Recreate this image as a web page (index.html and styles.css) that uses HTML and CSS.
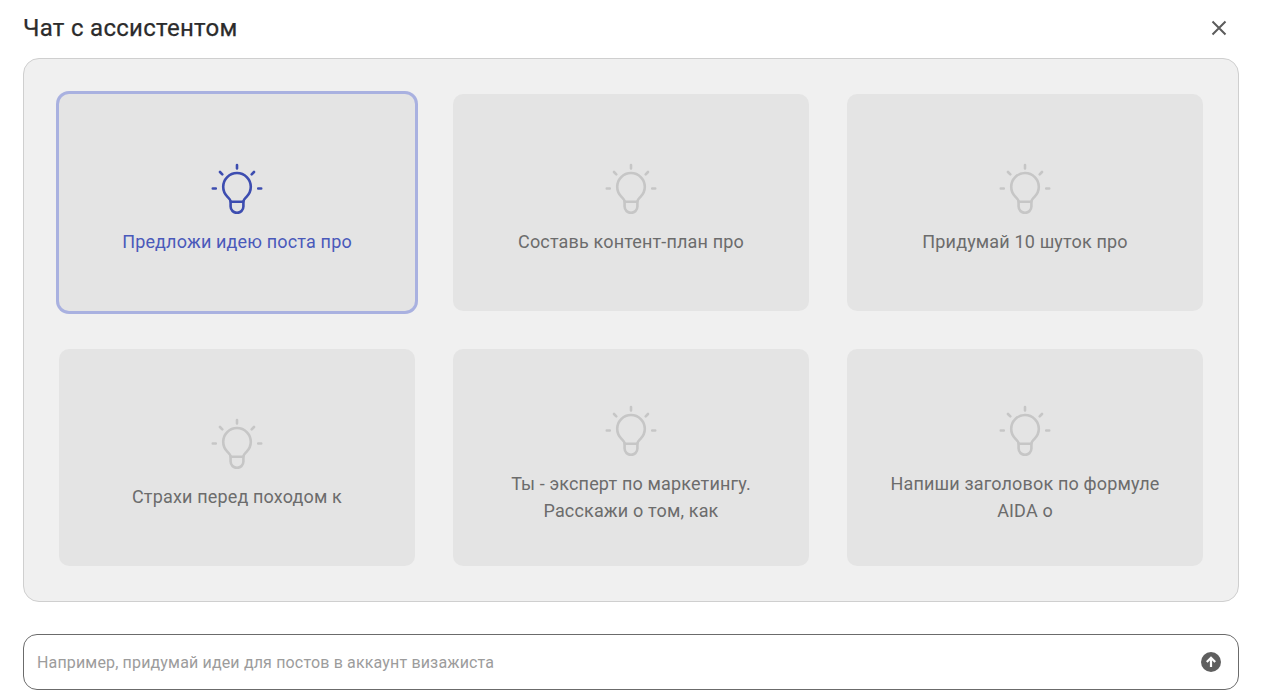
FILE: index.html
```html
<!DOCTYPE html>
<html lang="ru">
<head>
<meta charset="utf-8">
<title>Чат с ассистентом</title>
<link rel="stylesheet" href="styles.css">
</head>
<body>
<svg class="sprite" width="0" height="0" aria-hidden="true">
  <symbol id="bulb" viewBox="0 0 64 64">
    <path d="M25.6 51.5v5a6.4 6.4 0 0 0 12.8 0v-5" />
    <path d="M25.8 51.8c-.3-2.400-1.700-3.300-3.500-5.200a13.800 13.800 0 1 1 19.400 0c-1.800 1.900-3.200 2.800-3.500 5.200h-12.400z" />
    <path d="M32 15v3.500M7.800 38.500h3M53.200 38.500h3M15 22l2.300 2.300M49 22l-2.300 2.300" />
  </symbol>
</svg>
<main class="app">
  <header class="head">
    <h1 class="title">Чат с ассистентом</h1>
    <button class="close" type="button" aria-label="Закрыть">
      <svg viewBox="0 0 16 16" width="16" height="16"><path d="M1.500 1.500l13 13M14.500 1.500l-13 13"/></svg>
    </button>
  </header>
  <section class="panel">
    <div class="card card-active">
      <svg class="bulb"><use href="#bulb"/></svg>
      <p class="label">Предложи идею поста про</p>
    </div>
    <div class="card">
      <svg class="bulb"><use href="#bulb"/></svg>
      <p class="label">Составь контент-план про</p>
    </div>
    <div class="card">
      <svg class="bulb"><use href="#bulb"/></svg>
      <p class="label">Придумай 10 шуток про</p>
    </div>
    <div class="card">
      <svg class="bulb"><use href="#bulb"/></svg>
      <p class="label">Страхи перед походом к</p>
    </div>
    <div class="card">
      <svg class="bulb"><use href="#bulb"/></svg>
      <p class="label">Ты - эксперт по маркетингу.<br>Расскажи о том, как</p>
    </div>
    <div class="card">
      <svg class="bulb"><use href="#bulb"/></svg>
      <p class="label">Напиши заголовок по формуле<br>AIDA о</p>
    </div>
  </section>
  <form class="composer">
    <span class="placeholder">Например, придумай идеи для постов в аккаунт визажиста</span>
    <svg class="send" viewBox="0 0 20 20" width="20" height="20" aria-hidden="true">
      <circle cx="10" cy="10" r="10"/>
      <path d="M10 15V5.800M5.800 10L10 5.800 14.200 10"/>
    </svg>
  </form>
</main>
</body>
</html>
```
FILE: styles.css
```css
* { box-sizing: border-box; }
html, body { margin: 0; height: 100%; background: #fff; }
body { font-family: Roboto, "Liberation Sans", sans-serif; letter-spacing: .01em; overflow: hidden; }
.sprite { position: absolute; }
.app { width: 1265px; height: 700px; padding: 0 26px 10px 23px; display: flex; flex-direction: column; }
.head { height: 58px; display: flex; align-items: center; justify-content: space-between; flex: none; }
.title { margin: 0 0 2px; font-size: 24px; font-weight: 400; letter-spacing: .012em; -webkit-text-stroke: .25px #2c2c2c; color: #2c2c2c; line-height: 55px; }
.close { width: 16px; height: 16px; padding: 0; margin: 0 12px 2px 0; border: 0; background: none; display: flex; }
.close path { fill: none; stroke: #5c5c5c; stroke-width: 2; }
.panel { height: 544px; flex: none; display: grid; grid-template-columns: repeat(3, 356px); grid-template-rows: repeat(2, 217px); gap: 38px; padding: 35px 35px; background: #f0f0f0; border: 1px solid #cfcfcf; border-radius: 16px; }
.card { display: flex; flex-direction: column; align-items: center; justify-content: center; gap: 14px; background: #e4e4e4; border-radius: 10px; color: #6c6c6c; }
.card-active { box-shadow: 0 0 0 3px #a9b1e0; color: #4a59ba; }
.bulb { width: 64px; height: 64px; flex: none; fill: none; stroke: #c6c6c6; stroke-width: 2.600; stroke-linecap: round; stroke-linejoin: round; }
.card-active .bulb { stroke: #3d4db0; }
.label { margin: 0; font-size: 18px; line-height: 27px; text-align: center; }
.composer { margin-top: 32px; height: 56px; flex: none; display: flex; align-items: center; justify-content: space-between; padding: 0 17px 0 13px; border: 1px solid #6b6b6b; border-radius: 14px; background: #fff; }
.placeholder { font-size: 16px; color: #9c9c9c; }
.send circle { fill: #5f5f5f; }
.send path { fill: none; stroke: #fff; stroke-width: 2.200; }
```
